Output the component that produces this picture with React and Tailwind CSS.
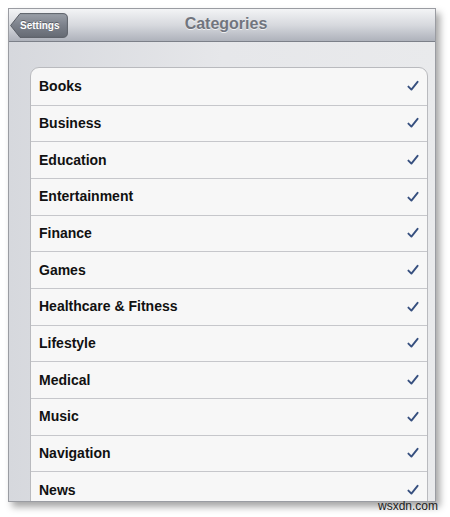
import React from "react";

const categories = [
  "Books",
  "Business",
  "Education",
  "Entertainment",
  "Finance",
  "Games",
  "Healthcare & Fitness",
  "Lifestyle",
  "Medical",
  "Music",
  "Navigation",
  "News",
];

function Check() {
  return (
    <svg width="12" height="12" viewBox="0 0 12 12" className="shrink-0">
      <path
        d="M1.4 6.6 L4.4 9.6 L10.6 1.8"
        fill="none"
        stroke="#37507f"
        strokeWidth="1.9"
        strokeLinecap="round"
        strokeLinejoin="round"
      />
    </svg>
  );
}

function BackButton() {
  return (
    <div className="relative h-[25px] w-[58px]">
      <svg width="58" height="25" viewBox="0 0 58 25" className="absolute inset-0">
        <defs>
          <linearGradient id="backFill" x1="0" y1="0" x2="0" y2="1">
            <stop offset="0" stopColor="#9a9fa8" />
            <stop offset="0.5" stopColor="#7b808a" />
            <stop offset="1" stopColor="#656a73" />
          </linearGradient>
        </defs>
        <path
          d="M0.6 12.5 L10 0.6 H53 Q57.4 0.6 57.4 5 V20 Q57.4 24.4 53 24.4 H10 Z"
          fill="url(#backFill)"
          stroke="#5a5e66"
          strokeWidth="1"
        />
      </svg>
      <span className="absolute inset-0 flex items-center pl-[10px] text-[10px] font-bold text-white [text-shadow:0_-1px_0_rgba(0,0,0,0.35)]">
        Settings
      </span>
    </div>
  );
}

export default function App() {
  return (
    <div
      className="h-[517px] w-[450px] bg-white pl-[8px] pt-[8px]"
      style={{ fontFamily: '"Liberation Sans", Arial, sans-serif' }}
    >
      <div className="flex h-[494px] w-[428px] flex-col overflow-hidden border border-[#9a9ca2] bg-[#e1e3e7] shadow-[4px_5px_7px_rgba(0,0,0,0.35)]">
        {/* Navigation bar */}
        <div className="relative flex h-[33px] shrink-0 items-center border-b border-[#7c8089] bg-gradient-to-b from-[#f3f4f6] via-[#d7d9de] to-[#aeb2bb] pl-[1px]">
          <BackButton />
          <div className="absolute inset-0 flex items-center justify-center pb-[3px] pl-[8px] text-[16px] font-bold text-[#71757e] [text-shadow:0_1px_0_rgba(255,255,255,0.7)]">
            Categories
          </div>
        </div>

        {/* Grouped list */}
        <div className="flex-1 bg-gradient-to-r from-[#d6d8dd] via-[#e6e7ea] to-[#e9eaec] pl-[21px] pr-[7px] pt-[25px]">
          <div className="overflow-hidden rounded-t-[9px] border border-[#b9babe] bg-[#f7f7f7]">
            {categories.map((name, i) => (
              <div
                key={name}
                className={`flex h-[36.67px] items-center justify-between pl-[8px] pr-[8px] ${
                  i > 0 ? "border-t border-[#c6c7cb]" : ""
                }`}
              >
                <span className="text-[14px] font-bold text-[#111]">{name}</span>
                <Check />
              </div>
            ))}
          </div>
        </div>
      </div>
      <div className="-mt-[2px] flex w-[430px] justify-end">
        <span className="text-[12px] leading-none text-[#222]">wsxdn.com</span>
      </div>
    </div>
  );
}
